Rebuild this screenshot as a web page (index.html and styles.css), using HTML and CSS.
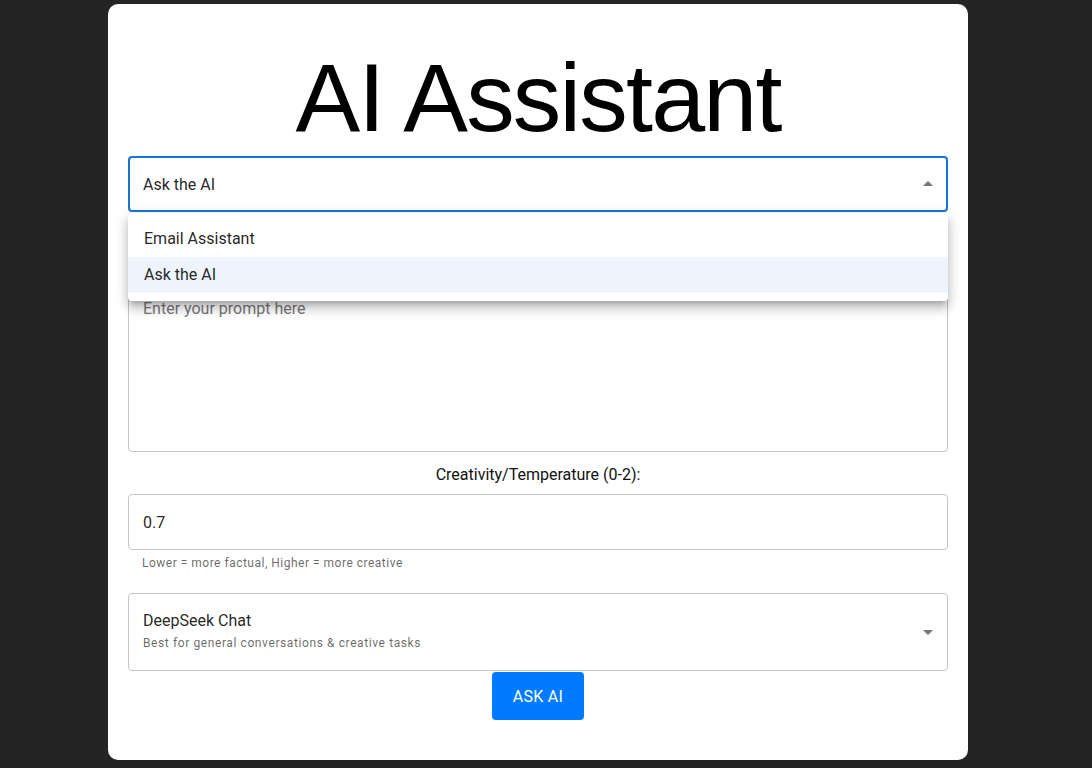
FILE: index.html
```html
<!DOCTYPE html>
<html lang="en">
<head>
<meta charset="utf-8">
<title>AI Assistant</title>
<link rel="stylesheet" href="styles.css">
</head>
<body>
<div class="card">
  <h1 class="title">AI Assistant</h1>
  <div class="form">
    <div class="select-wrap">
      <div class="select focused">
        <span class="select-value">Ask the AI</span>
        <svg class="arrow up" viewBox="0 0 24 24" width="24" height="24"><path d="M7 10l5 5 5-5z"/></svg>
      </div>
      <ul class="menu">
        <li class="menu-item">Email Assistant</li>
        <li class="menu-item selected">Ask the AI</li>
      </ul>
    </div>
    <textarea class="prompt" rows="6" placeholder="Enter your prompt here"></textarea>
    <label class="temp-label">Creativity/Temperature (0-2):</label>
    <div class="input">0.7</div>
    <p class="helper">Lower = more factual, Higher = more creative</p>
    <div class="select model">
      <div class="model-text">
        <span class="model-name">DeepSeek Chat</span>
        <span class="model-desc">Best for general conversations &amp; creative tasks</span>
      </div>
      <svg class="arrow" viewBox="0 0 24 24" width="24" height="24"><path d="M7 10l5 5 5-5z"/></svg>
    </div>
    <button class="ask-btn">Ask AI</button>
  </div>
</div>
</body>
</html>
```

FILE: styles.css
```css
* { box-sizing: border-box; }
html, body { margin: 0; padding: 0; }
body {
  background: #242424;
  font-family: Roboto, "Liberation Sans", Arial, sans-serif;
  color: rgba(0,0,0,0.87);
  padding: 4px 16px 0 0;
}
.card {
  width: 860px;
  height: 756px;
  margin: 0 auto;
  background: #fff;
  border-radius: 10px;
  padding: 24px 20px 40px;
}
.title {
  font-family: "Liberation Sans", Arial, sans-serif;
  font-weight: 400;
  font-size: 97px;
  line-height: 1;
  letter-spacing: -1.8px;
  text-align: center;
  color: #000;
  margin: 21px 0 10px;
}
.form {
  display: flex;
  flex-direction: column;
}
.select-wrap { position: relative; }
.select {
  position: relative;
  height: 56px;
  border: 1px solid #c4c4c4;
  border-radius: 4px;
  display: flex;
  align-items: center;
  padding: 0 14px;
  font-size: 16px;
}
.select.focused {
  border: 2px solid #1976d2;
  padding: 0 13px;
}
.arrow {
  position: absolute;
  right: 7px;
  top: 50%;
  margin-top: -12px;
  fill: rgba(0,0,0,0.54);
}
.select.focused .arrow { right: 6px; }
.arrow.up { transform: rotate(180deg); }
.menu {
  position: absolute;
  left: 0;
  right: 0;
  top: 57px;
  margin: 0;
  padding: 8px 0;
  list-style: none;
  background: #fff;
  border-radius: 4px;
  box-shadow: 0px 5px 5px -3px rgba(0,0,0,0.2), 0px 8px 10px 1px rgba(0,0,0,0.14), 0px 3px 14px 2px rgba(0,0,0,0.12);
  z-index: 10;
}
.menu-item {
  padding: 6px 16px;
  font-size: 16px;
  line-height: 24px;
}
.menu-item.selected { background: rgba(25,118,210,0.08); }
.prompt {
  margin-top: 68px;
  height: 172px;
  width: 100%;
  resize: none;
  border: 1px solid #c4c4c4;
  border-radius: 4px;
  padding: 15.5px 14px;
  font-family: Roboto, "Liberation Sans", Arial, sans-serif;
  font-size: 16px;
  line-height: 23px;
  color: rgba(0,0,0,0.87);
  outline: none;
}
.prompt::placeholder { color: #777; opacity: 1; }
.temp-label {
  text-align: center;
  font-size: 16px;
  line-height: 23px;
  margin: 11px 0 8px;
  color: #111;
}
.input {
  height: 56px;
  border: 1px solid #c4c4c4;
  border-radius: 4px;
  padding: 0 14px;
  display: flex;
  align-items: center;
  font-size: 16px;
}
.helper {
  margin: 3px 14px 0;
  font-size: 12px;
  line-height: 20px;
  letter-spacing: 0.5px;
  color: rgba(0,0,0,0.6);
}
.select.model {
  margin-top: 20px;
  height: 78px;
  align-items: flex-start;
  padding-top: 15px;
}
.model-text {
  display: flex;
  flex-direction: column;
}
.model-name { font-size: 16px; line-height: 23px; }
.model-desc {
  margin-top: 1px;
  font-size: 12px;
  line-height: 20px;
  letter-spacing: 0.6px;
  color: rgba(0,0,0,0.6);
}
.ask-btn {
  align-self: center;
  margin-top: 1px;
  width: 92px;
  height: 48px;
  border: none;
  border-radius: 4px;
  background: #007bff;
  color: #fff;
  font-family: Roboto, "Liberation Sans", Arial, sans-serif;
  font-size: 16px;
  text-transform: uppercase;
  letter-spacing: 0.3px;
}
```
